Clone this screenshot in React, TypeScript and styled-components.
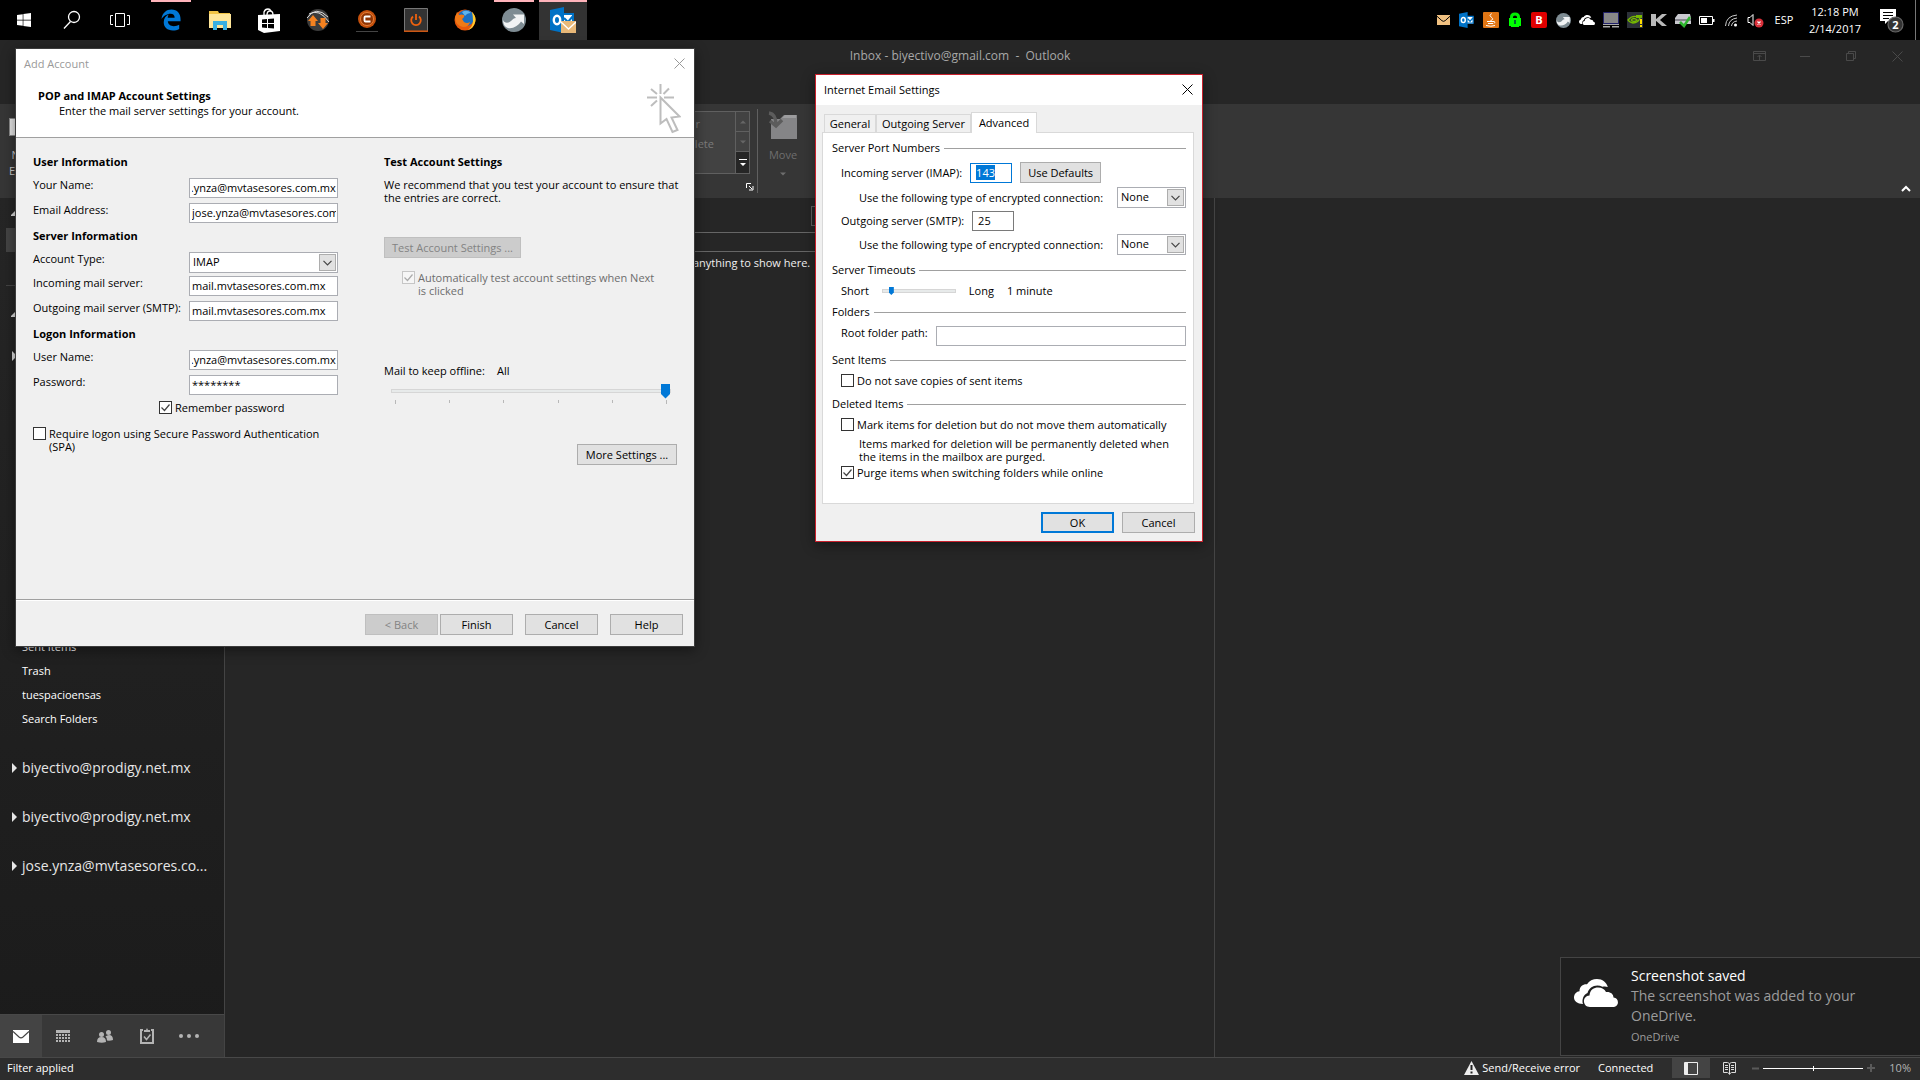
import React, { useEffect, useRef } from "react";
import styled, { createGlobalStyle, css } from "styled-components";
import { FaWindows } from "react-icons/fa";

const GlobalStyle = createGlobalStyle`
  *, *::before, *::after { box-sizing: border-box; }
  body {
    margin: 0;
    background: #262626;
    color: #000;
    font: 11px/14px "Open Sans", "Noto Sans", sans-serif;
  }
  button, input, select { font: inherit; color: inherit; margin: 0; }
  h1, h2, h3, p { margin: 0; font: inherit; }
  svg { display: block; }
`;

const Desktop = styled.div`
  position: relative;
  display: flex;
  flex-direction: column;
  min-height: 100vh;
  overflow: hidden;
`;

/* ---------- taskbar ---------- */

const Taskbar = styled.nav`
  display: flex;
  height: 40px;
  background: #000;
  color: #fff;
`;

const SystemButtons = styled.div`
  display: flex;
  width: 147px;
`;

const PinnedApps = styled.div`
  display: flex;
  gap: 1px;
`;

const TaskButton = styled.button<{ $active?: boolean; $running?: boolean }>`
  display: grid;
  place-items: center;
  width: 48px;
  height: 40px;
  padding: 0;
  border: 0;
  color: #fff;
  background: ${(p) => (p.$active ? "#333" : "transparent")};
  ${(p) =>
    (p.$running || p.$active) &&
    css`
      background-image: linear-gradient(#ffb3ba, #ffb3ba);
      background-repeat: no-repeat;
      background-position: top center;
      background-size: ${p.$active ? "48px" : "40px"} 2px;
    `}
`;

const Tray = styled.div`
  display: flex;
  align-items: center;
  margin-left: auto;
`;

const TrayButton = styled.button`
  display: grid;
  place-items: center;
  width: 24px;
  height: 40px;
  padding: 0;
  border: 0;
  background: none;
`;

const Language = styled.span`
  width: 34px;
  text-align: center;
`;

const Clock = styled.div`
  width: 68px;
  text-align: center;
  line-height: 17px;
`;

const NotifyButton = styled(TrayButton)`
  width: 46px;
`;

const ShowDesktop = styled.div`
  width: 5px;
  height: 40px;
  border-left: 1px solid #777;
`;

/* ---------- mail window ---------- */

const MailWindow = styled.main`
  flex: 1;
  display: flex;
  flex-direction: column;
  background: #262626;
`;

const MailTitleBar = styled.header`
  display: grid;
  grid-template-columns: 1fr auto 1fr;
  height: 64px;
  padding: 7px 0;
  color: #a8a8a8;
  font-size: 12px;
  line-height: 18px;
  white-space: pre;
`;

const WindowControls = styled.div`
  grid-column: 3;
  display: flex;
  justify-content: flex-end;
`;

const WindowButton = styled.button`
  display: grid;
  place-items: center;
  width: 46px;
  height: 18px;
  padding: 0;
  border: 0;
  background: none;
  color: #4a4a4a;
`;

const Ribbon = styled.section`
  display: flex;
  height: 94px;
  background: #363636;
  color: #6e6e6e;
`;

const NewEmail = styled.button`
  display: flex;
  flex-direction: column;
  align-items: center;
  width: 30px;
  margin-left: 8px;
  padding: 14px 0 0;
  border: 0;
  background: none;
  color: #ccc;
  line-height: 16px;
`;

const NewEmailIcon = styled.span`
  width: 28px;
  height: 18px;
  margin-bottom: 11px;
  border: 1px solid #8a8a8a;
  background: #e6e6e6;
`;

const QuickSteps = styled.div`
  display: flex;
  width: 130px;
  height: 63px;
  margin: 7px 0 0 582px;
  border: 1px solid #606060;
  background: #424242;
`;

const QuickStepList = styled.div`
  flex: 1;
  padding: 2px 0 2px 18px;
  line-height: 20px;
  color: #7c7c7c;
  white-space: nowrap;
`;

const GalleryScroll = styled.div`
  display: grid;
  grid-template-rows: 20px 20px 1fr;
  width: 14px;
  border-left: 1px solid #606060;
`;

const GalleryButton = styled.button<{ $enabled?: boolean }>`
  display: grid;
  place-items: center;
  padding: 0;
  border: 0;
  border-bottom: 1px solid #606060;
  background: ${(p) => (p.$enabled ? "#262626" : "#424242")};
  color: ${(p) => (p.$enabled ? "#fff" : "#666")};
  &:last-child { border-bottom: 0; }
`;

const Launcher = styled.button`
  align-self: flex-end;
  display: grid;
  place-items: center;
  width: 8px;
  height: 22px;
  margin: 0 3px 0 -4px;
  padding: 0;
  border: 0;
  background: none;
  color: #fff;
`;

const RibbonDivider = styled.div`
  width: 1px;
  height: 84px;
  margin-top: 5px;
  background: #606060;
`;

const RibbonButton = styled.button<{ $enabled?: boolean }>`
  display: flex;
  flex-direction: column;
  align-items: center;
  gap: 7px;
  width: 50px;
  padding: 7px 0 0;
  border: 0;
  background: none;
  color: ${(p) => (p.$enabled ? "#e6e6e6" : "#6e6e6e")};
`;

const CollapseRibbon = styled.button`
  align-self: flex-end;
  margin: 0 9px 5px auto;
  padding: 0;
  border: 0;
  background: none;
  color: #fff;
`;

const Panes = styled.div`
  flex: 1;
  display: grid;
  grid-template-columns: 225px 990fr 705fr;
`;

const Sidebar = styled.aside`
  display: flex;
  flex-direction: column;
  border-right: 1px solid #444;
  background: linear-gradient(#262626, #1b1b1b);
  color: #fff;
`;

const SidebarStub = styled.div<{ $h: number }>`
  display: flex;
  align-items: center;
  height: ${(p) => p.$h}px;
  padding-left: 11px;
  color: #ddd;
`;

const SelectedFolder = styled.div`
  height: 24px;
  margin-left: 6px;
  background: #444;
`;

const SidebarRule = styled.hr`
  width: 100%;
  height: 1px;
  margin: 33px 0 13px 6px;
  border: 0;
  background: #444;
`;

const FolderList = styled.ul`
  margin: 252px 0 12px;
  padding: 0 0 0 22px;
  list-style: none;
  line-height: 24px;
`;

const AccountRow = styled.button`
  display: flex;
  align-items: center;
  gap: 5px;
  height: 49px;
  padding: 0 0 0 11px;
  border: 0;
  background: none;
  color: #e6e6e6;
  font-size: 14px;
  white-space: nowrap;
`;

const NavBar = styled.nav`
  display: flex;
  height: 43px;
  margin-top: auto;
  border-top: 1px solid #484848;
  background: #383838;
`;

const NavButton = styled.button<{ $active?: boolean }>`
  display: grid;
  place-items: center;
  width: 42px;
  padding: 0;
  border: 0;
  color: ${(p) => (p.$active ? "#fff" : "#b4b4b4")};
  background: ${(p) => (p.$active ? "#444" : "transparent")};
`;

const ListPane = styled.section`
  display: flex;
  flex-direction: column;
  padding-right: 10px;
  border-right: 1px solid #444;
  color: #f0f0f0;
  text-align: center;
`;

const SearchRow = styled.div`
  display: flex;
  justify-content: flex-end;
  height: 35px;
  margin-right: 8px;
  padding: 8px 8px 6px;
  border-bottom: 1px solid #666;
`;

const ScopeBox = styled.div`
  width: 377px;
  border: 1px solid #606060;
`;

const ListHeader = styled.div`
  height: 19px;
  margin: 0 8px 4px 0;
  border-bottom: 1px solid #666;
`;

const StatusBar = styled.footer`
  display: flex;
  align-items: center;
  height: 23px;
  padding: 0 9px 2px 7px;
  border-top: 1px solid #484848;
  background: #2d2d2d;
  color: #fff;
`;

const SyncStatus = styled.button`
  display: flex;
  align-items: center;
  gap: 3px;
  margin: 0 18px 0 auto;
  padding: 0;
  border: 0;
  background: none;
`;

const ViewButton = styled.button<{ $active?: boolean }>`
  display: grid;
  place-items: center;
  width: 38px;
  height: 20px;
  padding: 0;
  border: 0;
  background: ${(p) => (p.$active ? "#444" : "transparent")};
`;

const ViewSwitch = styled.div`
  display: flex;
  margin-left: 19px;
`;

const Zoom = styled.div`
  display: flex;
  align-items: center;
  gap: 4px;
  margin: 0 14px 0 4px;
  color: #5a5a5a;
`;

const ZoomRange = styled.input`
  appearance: none;
  width: 100px;
  height: 11px;
  background: linear-gradient(#fff, #fff) center / 100% 1px no-repeat;
  &::-webkit-slider-thumb {
    appearance: none;
    width: 1px;
    height: 5px;
    background: #fff;
  }
`;

const ZoomLevel = styled.span`
  color: #b4b4b4;
`;

/* ---------- shared dialog parts ---------- */

const Dialog = styled.section<{ $x: number; $y: number; $w: number; $edge: string }>`
  position: absolute;
  left: ${(p) => p.$x}px;
  top: ${(p) => p.$y}px;
  width: ${(p) => p.$w}px;
  border: 1px solid ${(p) => p.$edge};
  background: #f0f0f0;
  box-shadow: 0 3px 12px rgba(0, 0, 0, 0.45);
`;

const DialogTitle = styled.header<{ $inactive?: boolean }>`
  display: flex;
  align-items: center;
  justify-content: space-between;
  height: 30px;
  padding: 0 9px 1px 8px;
  background: #fff;
  color: ${(p) => (p.$inactive ? "#999" : "#000")};
`;

const CloseButton = styled.button`
  padding: 0;
  border: 0;
  background: none;
  color: inherit;
`;

const PushButton = styled.button<{ $w?: number; $default?: boolean }>`
  width: ${(p) => p.$w ?? 73}px;
  height: 21px;
  padding: 0;
  border: ${(p) => (p.$default ? "2px solid #0078d7" : "1px solid #adadad")};
  background: #e1e1e1;
  line-height: 14px;
  white-space: nowrap;
  &:disabled {
    border-color: #bfbfbf;
    background: #ccc;
    color: #838383;
  }
`;

const TextBox = styled.input<{ $w?: number; $edge?: string }>`
  width: ${(p) => (p.$w ? p.$w + "px" : "auto")};
  flex: ${(p) => (p.$w ? "none" : "1")};
  min-width: 0;
  height: 20px;
  padding: 0 1px 1px 2px;
  border: 1px solid ${(p) => p.$edge ?? "#abadb3"};
  border-radius: 0;
  outline: 0;
  background: #fff;
  &::selection { background: #0078d7; color: #fff; }
`;

const PortBox = styled(TextBox)`
  padding: 0 5px 1px;
`;

const SelectFrame = styled.span<{ $w: number }>`
  display: grid;
  grid-template-areas: "stack";
  align-items: center;
  width: ${(p) => p.$w}px;
  height: 21px;
  > * { grid-area: stack; }
`;

const NativeSelect = styled.select`
  appearance: none;
  width: 100%;
  height: 21px;
  padding: 0 20px 1px 3px;
  border: 1px solid #abadb3;
  border-radius: 0;
  background: #fff;
`;

const SelectArrow = styled.span`
  justify-self: end;
  display: grid;
  place-items: center;
  width: 17px;
  height: 17px;
  margin-right: 2px;
  border: 1px solid #adadad;
  background: #e1e1e1;
  color: #444;
  pointer-events: none;
`;

const tick = `url("data:image/svg+xml,%3Csvg xmlns='http://www.w3.org/2000/svg' viewBox='0 0 11 11'%3E%3Cpath d='M1.5 5.5l3 3 5-6' fill='none' stroke='%23444' stroke-width='1.2'/%3E%3C/svg%3E")`;

const TickBox = styled.input`
  appearance: none;
  flex: none;
  width: 13px;
  height: 13px;
  border: 1px solid #333;
  background: #fff;
  &:checked { background: #fff ${tick} center / 11px no-repeat; }
  &:disabled { opacity: 0.4; border-color: #888; }
`;

const TickLabel = styled.label<{ $indent?: number; $disabled?: boolean }>`
  display: flex;
  align-items: flex-start;
  gap: 3px;
  min-height: 14px;
  padding-left: ${(p) => p.$indent ?? 0}px;
  line-height: 13px;
  color: ${(p) => (p.$disabled ? "#6d6d6d" : "#000")};
`;

const Slider = styled.input<{ $w: number; $big?: boolean }>`
  appearance: none;
  display: block;
  width: ${(p) => p.$w}px;
  height: ${(p) => (p.$big ? 15 : 10)}px;
  background: none;
  &::-webkit-slider-runnable-track {
    height: 4px;
    border: 1px solid #d6d6d6;
    background: #e7eaea;
  }
  &::-webkit-slider-thumb {
    appearance: none;
    width: ${(p) => (p.$big ? 9 : 5)}px;
    height: ${(p) => (p.$big ? 15 : 8)}px;
    margin-top: ${(p) => (p.$big ? -6 : -3)}px;
    background: #0078d7;
    clip-path: polygon(0 0, 100% 0, 100% 70%, 50% 100%, 0 70%);
  }
`;

/* ---------- add account dialog ---------- */

const WizardHeader = styled.div`
  display: flex;
  justify-content: space-between;
  height: 59px;
  padding: 10px 13px 0 22px;
  border-bottom: 1px solid #a0a0a0;
  background: #fff;
  svg { margin-top: -5px; }
`;

const WizardHeading = styled.h1`
  font-weight: 700;
`;

const WizardHint = styled.p`
  padding: 1px 0 0 21px;
`;

const WizardBody = styled.div`
  display: grid;
  grid-template-columns: 351px 1fr;
  height: 462px;
  padding: 16px 14px 0 17px;
  border-bottom: 1px solid #a0a0a0;
`;

const SectionHeading = styled.h2`
  padding-top: 1px;
  margin-bottom: 9px;
  font-weight: 700;
`;

const Field = styled.div<{ $gap?: number }>`
  display: flex;
  align-items: flex-start;
  margin-bottom: ${(p) => p.$gap ?? 5}px;
`;

const FieldLabel = styled.label`
  width: 156px;
`;

const Logon = styled.div`
  display: flex;
  flex-direction: column;
  gap: 12px;
  width: 310px;
  padding-top: 1px;
`;

const TestColumn = styled.div`
  display: flex;
  flex-direction: column;
  align-items: flex-start;
`;

const Advice = styled.p`
  margin-bottom: 33px;
  line-height: 13px;
`;

const AutoTest = styled.div`
  width: 262px;
  margin: 13px 0 67px 18px;
`;

const OfflineRow = styled.div`
  display: flex;
  gap: 12px;
  margin-bottom: 5px;
`;

const OfflineScale = styled.div`
  padding-left: 7px;
  margin-bottom: 40px;
`;

const Ticks = styled.div`
  display: flex;
  justify-content: space-between;
  width: 272px;
  margin: 2px 0 0 4px;
  span { width: 1px; height: 3px; background: #b8b8b8; }
  span:first-child, span:last-child { height: 4px; }
`;

const MoreSettings = styled.div`
  align-self: flex-end;
  margin-right: 3px;
`;

const WizardFooter = styled.footer`
  display: flex;
  justify-content: flex-end;
  padding: 13px 11px 11px;
  border-top: 1px solid #fff;
`;

const ButtonPair = styled.div`
  display: flex;
  gap: 2px;
`;

const FooterGroup = styled.div`
  display: flex;
  gap: 12px;
`;

/* ---------- internet email settings dialog ---------- */

const TabBar = styled.div`
  display: flex;
  align-items: flex-end;
  padding: 7px 8px 0;
`;

const Tab = styled.button<{ $selected?: boolean; $w: number }>`
  width: ${(p) => p.$w}px;
  height: ${(p) => (p.$selected ? 21 : 18)}px;
  margin: 0 0 ${(p) => (p.$selected ? -1 : 0)}px 0;
  padding: 0;
  border: 1px solid #d9d9d9;
  border-bottom: 0;
  background: ${(p) => (p.$selected ? "#fff" : "#f0f0f0")};
  white-space: nowrap;
  z-index: 1;
  & + & { border-left-width: ${(p) => (p.$selected ? 1 : 0)}px; }
`;

const TabPanel = styled.div`
  margin: 0 8px 0 6px;
  padding: 8px 7px 23px 9px;
  border: 1px solid #d9d9d9;
  background: #fff;
`;

const GroupTitle = styled.h3`
  display: flex;
  align-items: center;
  gap: 4px;
  margin-bottom: 7px;
  &::after {
    content: "";
    flex: 1;
    height: 1px;
    background: #a0a0a0;
  }
`;

const SettingRow = styled.div<{ $indent?: number; $gap?: number }>`
  display: flex;
  align-items: center;
  gap: 8px;
  padding-left: ${(p) => p.$indent ?? 9}px;
  margin-bottom: ${(p) => p.$gap ?? 3}px;
  ${SelectFrame} { margin-left: auto; }
`;

const TimeoutRow = styled(SettingRow)`
  gap: 13px;
  height: 14px;
`;

const FolderRow = styled(SettingRow)`
  align-items: flex-start;
`;

const Purged = styled.p`
  padding: 5px 0 3px 27px;
  line-height: 13px;
`;

const GroupEnd = styled.div`
  height: 9px;
`;

const SettingsFooter = styled.footer`
  display: flex;
  justify-content: flex-end;
  gap: 8px;
  padding: 8px 7px;
`;

/* ---------- toast ---------- */

const Toast = styled.aside`
  position: absolute;
  right: 0;
  bottom: 24px;
  display: grid;
  grid-template-columns: 44px 1fr;
  gap: 13px;
  width: 360px;
  height: 99px;
  padding: 8px 12px 8px 13px;
  border: 1px solid #444;
  border-right: 0;
  background: #1f1f1f;
  color: #9c9c9c;
  svg { margin-top: 13px; }
`;

const ToastTitle = styled.h2`
  color: #fff;
  font-size: 14px;
  line-height: 20px;
`;

const ToastText = styled.p`
  font-size: 14px;
  line-height: 20px;
`;

const ToastSource = styled.p`
  padding-top: 2px;
  line-height: 18px;
`;

/* ---------- icons ---------- */

const Cross = ({ size = 11 }: { size?: number }) => (
  <svg width={size} height={size} viewBox="0 0 11 11" stroke="currentColor" fill="none">
    <path d="M.5.5l10 10M10.5.5l-10 10" />
  </svg>
);

const Triangle = ({ dir }: { dir: "right" | "up" | "down" | "corner" }) => {
  const d = { right: "M1 0l5 5-5 5z", up: "M2 6.500l3-3 3 3z", down: "M2 3.500l3 3 3-3z", corner: "M5 2v6H-1z" }[dir];
  return (
    <svg width={dir === "right" || dir === "corner" ? 6 : 10} height="10" fill="currentColor">
      <path d={d} />
    </svg>
  );
};

const Envelope = ({ w, body, line }: { w: number; body: string; line: string }) => (
  <svg width={w} height={(w * 13) / 16} viewBox="0 0 16 13">
    <path fill={body} d="M0 0h16v13H0z" />
    <path fill="none" stroke={line} strokeWidth="1.2" d="M0 1.500l6 5.500q2 1.600 4 0l6-5.500" />
  </svg>
);

const OutlookMark = ({ size, badge }: { size: number; badge?: boolean }) => (
  <svg width={size} height={size} viewBox="0 0 26 26">
    <path fill="#fff" d="M13 7h10v12H13z" />
    <path fill="none" stroke="#0072c6" strokeWidth="2" d="M13 7h10v11H13M14 11l4 4 5-6" />
    <path fill="#0072c6" d="M0 3l14-3v26L0 23z" />
    <ellipse cx="7" cy="13" rx="3.200" ry="4.200" fill="none" stroke="#fff" strokeWidth="2.400" />
    {badge && (
      <>
        <path fill="#e8b878" d="M11 14h15v12H11z" />
        <path fill="none" stroke="#fff" strokeWidth="1.300" d="M11 15l7.500 7 7.500-7" />
      </>
    )}
  </svg>
);

const EdgeIcon = () => (
  <svg width="20" height="22" viewBox="0 0 22 24" fill="#0078d7">
    <path d="M.5 11C1.500 4 6 .5 11.500.5 18 .5 21.500 5 21.500 11v2.500h-14c.2 3.500 3 5.300 6.500 5.300 2.500 0 4.500-.6 6-1.600v4.600c-2 1.200-4.500 1.700-7 1.700-6 0-10-3.500-10-9 0-4 2-7 5.500-8.500-.7 1-1 2-1.100 3.500H15C15 6.500 13.500 5 10.500 5 6.500 5 2.500 7.500.5 11z" />
  </svg>
);

const Clouds = ({ w }: { w: number }) => (
  <svg width={w} height={(w * 28) / 44} viewBox="0 0 44 28" fill="#fff">
    <path d="M9 25C3 25 0 22 0 18.500c0-3.500 2.500-6 5.500-6.300C5.500 7.500 9 5 13 5.300 15 1.800 19 0 23 0c5.500 0 9.500 3.300 10.800 8-2-.8-3.800-.7-5.300-.2C22 4.500 15 8 13.500 14 9.500 15.500 7.500 21 9 25z" />
    <path d="M16 28c-8 0-8-11-.5-11.500C16 10.500 20 8.500 24 8.500c4 0 6.500 1.700 8 4.500 4.500-.5 7.500 2 7.500 5.500 6 .3 6 9.500-.5 9.500z" />
  </svg>
);

const Swirl = ({ size }: { size: number }) => (
  <svg width={size} height={size} viewBox="0 0 24 24">
    <circle cx="12" cy="12" r="12" fill="#7e8c93" />
    <path fill="#f1f3f4" d="M1 12c1 3 5 4 8 1 2-2 3-3 5-3l-3-3.500h11V16l-3-2.500C16 18 11 21 6 20 2.500 19 1 15.500 1 12z" />
  </svg>
);

const SearchIcon = () => (
  <svg width="18" height="20" viewBox="0 0 18 20" fill="none" stroke="#fff" strokeWidth="1.300">
    <circle cx="11" cy="7" r="5.500" />
    <path d="M7.500 11.500L1 18.500" />
  </svg>
);

const TaskViewIcon = () => (
  <svg width="22" height="16" viewBox="0 0 22 16" fill="none" stroke="#fff">
    <path d="M6.500 1.500h9v13h-9zM4 3.500H1.500v9H4M18 3.500h2.500v9H18" />
  </svg>
);

const FolderIcon = () => (
  <svg width="22" height="20" viewBox="0 0 22 20">
    <path fill="#f2c445" d="M0 1h9l1 2h11v2H0z" />
    <path fill="#ffe699" d="M0 4h22v14H0z" />
    <path fill="#38b0e3" d="M4 11h14v9h-4v-5H8v5H4z" />
  </svg>
);

const StoreIcon = () => (
  <svg width="22" height="25" viewBox="0 0 22 25">
    <path fill="none" stroke="#fff" strokeWidth="1.300" d="M6 7V4q1-3 4-3 2 0 3 2M9 7q0-4 3-4t3 4" />
    <path fill="#fff" d="M0 7l22-1v17l-16 2-6-3z" />
    <path fill="#000" d="M4 11.500l5-.5v4H4zM10 11l6-.5V15h-6zM4 16h5v4l-5-.5zM10 16h6v4.500l-6-.4z" />
  </svg>
);

const TransferIcon = () => (
  <svg width="24" height="24" viewBox="0 0 24 24">
    <circle cx="12" cy="12" r="11" fill="#3c3c3c" />
    <path fill="none" stroke="#ddd" d="M1 10Q10-3 22 9M3 6q10-6 20 8" />
    <path fill="#f58220" d="M7 7l5 6H9.500v5h-5v-5H2zM17 21l-5-6h2.500v-5h5v5H22z" />
  </svg>
);

const CIcon = () => (
  <svg width="24" height="24" viewBox="0 0 24 24">
    <circle cx="12" cy="11" r="9" fill="#c4500c" />
    <circle cx="12" cy="11" r="6.500" fill="#8f3403" stroke="#e8813a" />
    <path fill="none" stroke="#fff" strokeWidth="1.800" d="M15.500 8.500h-5q-1 0-1 1v3q0 1 1 1h5" />
    <path stroke="#444" d="M1 23.500h22" />
  </svg>
);

const PowerIcon = () => (
  <svg width="24" height="24" viewBox="0 0 24 24">
    <path fill="#333" stroke="#777" d="M.5.5h23v23H.5z" />
    <path stroke="#d0560f" strokeWidth="1.500" d="M0 23.200h24" />
    <path fill="none" stroke="#f0620e" strokeWidth="1.800" d="M9 8.500a4.800 4.800 0 1 0 6 0M12 6v6" />
  </svg>
);

const FirefoxIcon = () => (
  <svg width="22" height="22" viewBox="0 0 22 22">
    <circle cx="11" cy="11" r="10.500" fill="#e8590c" />
    <circle cx="12" cy="9" r="8" fill="#1b6fc2" />
    <path fill="#5fb4ee" d="M8 3q5-3 9 1-4 0-6 3z" />
    <path fill="#ffcb2d" d="M18 3q6 6 2 13-2 4-6 5 5-4 5-9 0-5-1-9z" />
    <path fill="#f07a17" d="M1 9l2-6 2 3q2-1 5 0 1 2-2 4l2 3q3 2 6 0-1 5-7 5Q2 17 1 9z" />
  </svg>
);

const JavaIcon = () => (
  <svg width="16" height="16" viewBox="0 0 16 16">
    <rect width="16" height="16" rx="1" fill="#e07514" />
    <path fill="none" stroke="#fff" d="M8.500 1.500q-3 2 0 4t-1 3M4 9.500h7q2 .5 0 2M5 11.500h5M3 13.500q5 1.500 9 0" />
  </svg>
);

const LockIcon = () => (
  <svg width="14" height="16" viewBox="0 0 14 16">
    <path fill="none" stroke="#0e0" strokeWidth="3" d="M3.500 7V5q0-3 3.500-3t3.500 3v2" />
    <path fill="#0f0" d="M1 6h12v8h-2v1H3v-1H1z" />
    <path fill="#063" d="M6 8h2v4H6z" />
  </svg>
);

const BBadge = styled.span`
  width: 16px;
  height: 16px;
  border-radius: 2px;
  background: #e00000;
  color: #fff;
  font-weight: 700;
  line-height: 16px;
`;

const MonitorIcon = () => (
  <svg width="16" height="16" viewBox="0 0 16 16">
    <path fill="#888" stroke="#22226a" d="M.5.5h15v11H.5z" />
    <path fill="#aaa" d="M0 12h16v1H0zM0 14h7v1.500H0zM9 14h7v1.500H9z" />
  </svg>
);

const GpuIcon = () => (
  <svg width="16" height="16" viewBox="0 0 16 16">
    <path fill="#2c3138" d="M0 0h16v16H0z" />
    <path fill="none" stroke="#76b900" strokeWidth="1.300" d="M1 8q5-6 12-2-2 5-7 5-4-1-5-3zM4 8q3-3 6 0-3 3-6 0" />
    <path fill="#76b900" d="M9 3h6v3H9z" />
    <path fill="#fd0" d="M13 7h2v5h-2zM13 13h2v2h-2z" />
  </svg>
);

const KIcon = () => (
  <svg width="16" height="14" viewBox="0 0 16 14" fill="#b9b9b9">
    <path d="M0 1h5v12H0zM4 7l7-6h5L9 7l7 6h-5z" />
  </svg>
);

const PrinterIcon = () => (
  <svg width="16" height="16" viewBox="0 0 16 16">
    <path fill="#c9c9cf" d="M3 2h12l1 4v6H0V6z" />
    <path fill="#86868e" d="M0 7h16v2H0z" />
    <path fill="none" stroke="#2fb52f" strokeWidth="2.600" d="M5 10l4 4 6-9" />
  </svg>
);

const BatteryIcon = () => (
  <svg width="16" height="9" viewBox="0 0 16 9">
    <path fill="none" stroke="#fff" d="M.5.5h13v8H.5z" />
    <path fill="#fff" d="M2 2h6v5H2zM14 3h1.500v3H14z" />
  </svg>
);

const WifiIcon = () => (
  <svg width="14" height="14" viewBox="0 0 14 14" fill="none" stroke="#ccc">
    <path d="M1.500 13Q2 3 13 2M4.500 13Q5 6 13 5M7.500 13Q8 8.500 13 8" />
    <circle cx="11.500" cy="12" r="1.500" fill="#fff" stroke="none" />
  </svg>
);

const SpeakerIcon = () => (
  <svg width="17" height="15" viewBox="0 0 17 15">
    <path fill="none" stroke="#fff" d="M1 4.500h2l3-3v11l-3-3H1z" />
    <circle cx="12" cy="10" r="4.500" fill="#d9303a" />
    <path stroke="#fff" strokeWidth="1.200" d="M10.500 8.500l3 3M13.500 8.500l-3 3" />
  </svg>
);

const NotifyIcon = () => (
  <svg width="24" height="25" viewBox="0 0 24 25">
    <path fill="#fff" d="M0 1h16v12H8l-3 3v-3H0z" />
    <path stroke="#000" d="M3 4.500h10M3 7.500h10M3 10.500h6" />
    <circle cx="15.500" cy="16.500" r="7.500" fill="#333" stroke="#666" strokeWidth="1.200" />
    <text x="15.500" y="20.500" textAnchor="middle" fill="#fff" fontSize="11" fontWeight="700">2</text>
  </svg>
);

const ClickArrow = () => (
  <svg width="34" height="50" viewBox="0 0 34 50" fill="none" stroke="#bdbdbd" strokeWidth="2">
    <path d="M13.500 0v10M0 13.500h10M17 13.500h10M4 5l6 5M22 4.500l-5.500 5.500M4 22l6-5.500" />
    <path fill="#fff" d="M13.500 13.500v26l6-4.500 6 13 5-2-6-12.500 8-1z" />
  </svg>
);

const MoveIcon = () => (
  <svg width="30" height="30" viewBox="0 0 30 30">
    <path fill="#858587" d="M3 8h9l4-4h13v24H3z" />
    <path fill="#9c9c9e" d="M14 7l3-3h11v3z" />
    <path fill="none" stroke="#5c5c5c" strokeWidth="3.500" d="M1 2q7 1 7 12M2 10l6 5 6-6" />
  </svg>
);

const RulesIcon = () => (
  <svg width="34" height="30" viewBox="0 0 34 30">
    <path fill="#dcb468" d="M0 8h34v20H0z" />
    <path fill="#444" d="M2 19h8v7H2z" />
  </svg>
);

const navIcons = [
  <svg width="14" height="12" fill="currentColor">
    <path d="M0 0h14v3H0zM0 4h2v2H0zM3 4h2v2H3zM6 4h2v2H6zM9 4h2v2H9zM12 4h2v2h-2zM0 7h2v2H0zM3 7h2v2H3zM6 7h2v2H6zM9 7h2v2H9zM12 7h2v2h-2zM0 10h2v2H0zM3 10h2v2H3zM6 10h2v2H6zM9 10h2v2H9zM12 10h2v2h-2z" />
  </svg>,
  <svg width="16" height="13" fill="currentColor">
    <circle cx="4.500" cy="4.500" r="2.500" />
    <path d="M0 12q0-5 4.500-5T9 12q-4 1.500-9 0z" />
    <circle cx="11.500" cy="2.500" r="2.500" />
    <path d="M8.500 6.500Q10 5 12 5q4 0 4 5-3 1-6 .5 0-3-1.500-4z" />
  </svg>,
  <svg width="14" height="16" fill="none" stroke="currentColor">
    <path strokeWidth="2" d="M3 2H1v13h12V2h-2" />
    <path fill="currentColor" stroke="none" d="M4 2h2l1-2 1 2h2v2H4z" />
    <path strokeWidth="1.500" d="M4 8.500l2.500 3 4-5" />
  </svg>,
  <svg width="20" height="4" fill="currentColor">
    <circle cx="2" cy="2" r="2" />
    <circle cx="10" cy="2" r="2" />
    <circle cx="18" cy="2" r="2" />
  </svg>,
];
const navNames = ["Calendar", "People", "Tasks", "More"];

/* ---------- small components ---------- */

const AccountField = ({ id, label, value, toEnd }: { id: string; label: string; value: string; toEnd?: boolean }) => {
  const box = useRef<HTMLInputElement>(null);
  useEffect(() => {
    if (toEnd && box.current) box.current.scrollLeft = box.current.scrollWidth;
  }, [toEnd]);
  return (
    <Field>
      <FieldLabel htmlFor={id}>{label}</FieldLabel>
      <TextBox id={id} ref={box} $w={149} defaultValue={value} />
    </Field>
  );
};

const DropDown = ({ id, value, width }: { id: string; value: string; width: number }) => (
  <SelectFrame $w={width}>
    <NativeSelect id={id} defaultValue={value}>
      <option>{value}</option>
    </NativeSelect>
    <SelectArrow>
      <svg width="9" height="6" fill="none" stroke="currentColor" strokeWidth="1.200">
        <path d="M.5.8l4 4 4-4" />
      </svg>
    </SelectArrow>
  </SelectFrame>
);

const EncryptionRow = ({ id, gap }: { id: string; gap: number }) => (
  <SettingRow $indent={27} $gap={gap}>
    <label htmlFor={id}>Use the following type of encrypted connection:</label>
    <DropDown id={id} value="None" width={69} />
  </SettingRow>
);

const AddAccount = () => (
  <Dialog $x={15} $y={48} $w={680} $edge="#3c3c3c">
    <DialogTitle $inactive>
      Add Account
      <CloseButton aria-label="Close"><Cross /></CloseButton>
    </DialogTitle>
    <WizardHeader>
      <div>
        <WizardHeading>POP and IMAP Account Settings</WizardHeading>
        <WizardHint>Enter the mail server settings for your account.</WizardHint>
      </div>
      <ClickArrow />
    </WizardHeader>
    <WizardBody>
      <div>
        <SectionHeading>User Information</SectionHeading>
        <AccountField id="name" label="Your Name:" value="jose.ynza@mvtasesores.com.mx" toEnd />
        <AccountField id="email" label="Email Address:" value="jose.ynza@mvtasesores.com.mx" />
        <SectionHeading>Server Information</SectionHeading>
        <Field $gap={3}>
          <FieldLabel htmlFor="type">Account Type:</FieldLabel>
          <DropDown id="type" value="IMAP" width={149} />
        </Field>
        <AccountField id="incoming" label="Incoming mail server:" value="mail.mvtasesores.com.mx" />
        <AccountField id="outgoing" label="Outgoing mail server (SMTP):" value="mail.mvtasesores.com.mx" />
        <SectionHeading>Logon Information</SectionHeading>
        <AccountField id="user" label="User Name:" value="jose.ynza@mvtasesores.com.mx" toEnd />
        <AccountField id="password" label="Password:" value="********" />
        <Logon>
          <TickLabel $indent={126}>
            <TickBox type="checkbox" defaultChecked />
            Remember password
          </TickLabel>
          <TickLabel>
            <TickBox type="checkbox" />
            Require logon using Secure Password Authentication (SPA)
          </TickLabel>
        </Logon>
      </div>
      <TestColumn>
        <SectionHeading>Test Account Settings</SectionHeading>
        <Advice>We recommend that you test your account to ensure that the entries are correct.</Advice>
        <PushButton $w={137} disabled>Test Account Settings ...</PushButton>
        <AutoTest>
          <TickLabel $disabled>
            <TickBox type="checkbox" defaultChecked disabled />
            Automatically test account settings when Next is clicked
          </TickLabel>
        </AutoTest>
        <OfflineRow>
          <label htmlFor="offline">Mail to keep offline:</label>
          <span>All</span>
        </OfflineRow>
        <OfflineScale>
          <Slider id="offline" type="range" min={0} max={5} defaultValue={5} $w={280} $big />
          <Ticks>
            {[0, 1, 2, 3, 4, 5].map((n) => <span key={n} />)}
          </Ticks>
        </OfflineScale>
        <MoreSettings>
          <PushButton $w={100}>More Settings ...</PushButton>
        </MoreSettings>
      </TestColumn>
    </WizardBody>
    <WizardFooter>
      <FooterGroup>
        <ButtonPair>
          <PushButton disabled>&lt; Back</PushButton>
          <PushButton>Finish</PushButton>
        </ButtonPair>
        <PushButton>Cancel</PushButton>
        <PushButton>Help</PushButton>
      </FooterGroup>
    </WizardFooter>
  </Dialog>
);

const EmailSettings = () => {
  const port = useRef<HTMLInputElement>(null);
  useEffect(() => {
    port.current?.focus();
    port.current?.select();
  }, []);
  return (
    <Dialog $x={815} $y={74} $w={388} $edge="#c8202c">
      <DialogTitle>
        Internet Email Settings
        <CloseButton aria-label="Close"><Cross /></CloseButton>
      </DialogTitle>
      <TabBar role="tablist">
        <Tab role="tab" $w={52}>General</Tab>
        <Tab role="tab" $w={95}>Outgoing Server</Tab>
        <Tab role="tab" $w={66} $selected>Advanced</Tab>
      </TabBar>
      <TabPanel role="tabpanel">
        <GroupTitle>Server Port Numbers</GroupTitle>
        <SettingRow $gap={4}>
          <label htmlFor="imap">Incoming server (IMAP):</label>
          <PortBox id="imap" ref={port} $w={42} $edge="#0078d7" defaultValue="143" />
          <PushButton $w={81}>Use Defaults</PushButton>
        </SettingRow>
        <EncryptionRow id="imap-encryption" gap={3} />
        <SettingRow>
          <label htmlFor="smtp">Outgoing server (SMTP):</label>
          <PortBox id="smtp" $w={42} $edge="#7a7a7a" defaultValue="25" />
        </SettingRow>
        <EncryptionRow id="smtp-encryption" gap={8} />
        <GroupTitle>Server Timeouts</GroupTitle>
        <TimeoutRow $gap={7}>
          <label htmlFor="timeout">Short</label>
          <Slider id="timeout" type="range" min={0} max={100} defaultValue={9} $w={74} />
          <span>Long</span>
          <span>1 minute</span>
        </TimeoutRow>
        <GroupTitle>Folders</GroupTitle>
        <FolderRow $gap={7}>
          <label htmlFor="root">Root folder path:</label>
          <TextBox id="root" />
        </FolderRow>
        <GroupTitle>Sent Items</GroupTitle>
        <TickLabel $indent={9}>
          <TickBox type="checkbox" />
          Do not save copies of sent items
        </TickLabel>
        <GroupEnd />
        <GroupTitle>Deleted Items</GroupTitle>
        <TickLabel $indent={9}>
          <TickBox type="checkbox" />
          Mark items for deletion but do not move them automatically
        </TickLabel>
        <Purged>Items marked for deletion will be permanently deleted when the items in the mailbox are purged.</Purged>
        <TickLabel $indent={9}>
          <TickBox type="checkbox" defaultChecked />
          Purge items when switching folders while online
        </TickLabel>
      </TabPanel>
      <SettingsFooter>
        <PushButton $default>OK</PushButton>
        <PushButton>Cancel</PushButton>
      </SettingsFooter>
    </Dialog>
  );
};

const trayIcons = [
  <Envelope w={13} body="#f0c080" line="#000" />,
  <OutlookMark size={16} />,
  <JavaIcon />,
  <LockIcon />,
  <BBadge>B</BBadge>,
  <Swirl size={15} />,
  <Clouds w={16} />,
  <MonitorIcon />,
  <GpuIcon />,
  <KIcon />,
  <PrinterIcon />,
  <BatteryIcon />,
  <WifiIcon />,
  <SpeakerIcon />,
];

export default function App() {
  return (
    <Desktop>
      <GlobalStyle />
      <Taskbar>
        <SystemButtons>
          <TaskButton><FaWindows size={16} /></TaskButton>
          <TaskButton><SearchIcon /></TaskButton>
          <TaskButton><TaskViewIcon /></TaskButton>
        </SystemButtons>
        <PinnedApps>
          <TaskButton $running><EdgeIcon /></TaskButton>
          <TaskButton><FolderIcon /></TaskButton>
          <TaskButton><StoreIcon /></TaskButton>
          <TaskButton><TransferIcon /></TaskButton>
          <TaskButton><CIcon /></TaskButton>
          <TaskButton><PowerIcon /></TaskButton>
          <TaskButton><FirefoxIcon /></TaskButton>
          <TaskButton $running><Swirl size={24} /></TaskButton>
          <TaskButton $active><OutlookMark size={26} badge /></TaskButton>
        </PinnedApps>
        <Tray>
          {trayIcons.map((icon, i) => <TrayButton key={i}>{icon}</TrayButton>)}
          <Language>ESP</Language>
          <Clock>
            <div>12:18 PM</div>
            <div>2/14/2017</div>
          </Clock>
          <NotifyButton><NotifyIcon /></NotifyButton>
          <ShowDesktop />
        </Tray>
      </Taskbar>

      <MailWindow>
        <MailTitleBar>
          <span />
          <span>{"Inbox - biyectivo@gmail.com  -  Outlook"}</span>
          <WindowControls>
            <WindowButton aria-label="Ribbon display">
              <svg width="13" height="10" fill="none" stroke="currentColor"><path d="M.5.5h12v9H.5zM1 2.500h11M6.500 9V4.500M4.500 6l2-2 2 2" /></svg>
            </WindowButton>
            <WindowButton aria-label="Minimize">
              <svg width="10" height="1"><path fill="currentColor" d="M0 0h10v1H0z" /></svg>
            </WindowButton>
            <WindowButton aria-label="Restore">
              <svg width="10" height="10" fill="none" stroke="currentColor"><path d="M.5 2.500h7v7h-7zM2.500 2V.5h7v7H8" /></svg>
            </WindowButton>
            <WindowButton aria-label="Close"><Cross /></WindowButton>
          </WindowControls>
        </MailTitleBar>

        <Ribbon>
          <NewEmail>
            <NewEmailIcon />
            New Email
          </NewEmail>
          <QuickSteps>
            <QuickStepList>
              <div>To Manager</div>
              <div>Reply &amp; Delete</div>
            </QuickStepList>
            <GalleryScroll>
              <GalleryButton aria-label="Up"><Triangle dir="up" /></GalleryButton>
              <GalleryButton aria-label="Down"><Triangle dir="down" /></GalleryButton>
              <GalleryButton aria-label="More" $enabled>
                <svg width="8" height="8" fill="currentColor"><path d="M0 0h8v1H0zM1 4h6L4 7z" /></svg>
              </GalleryButton>
            </GalleryScroll>
          </QuickSteps>
          <Launcher aria-label="Quick step settings">
            <svg width="8" height="8" fill="none" stroke="currentColor"><path d="M.5 5V.5H5M3 3l3 3M7 3v4H3" /></svg>
          </Launcher>
          <RibbonDivider />
          <RibbonButton>
            <MoveIcon />
            Move
            <Triangle dir="down" />
          </RibbonButton>
          <RibbonButton $enabled>
            <RulesIcon />
            Rules
          </RibbonButton>
          <CollapseRibbon aria-label="Collapse ribbon">
            <svg width="10" height="8" fill="none" stroke="currentColor" strokeWidth="2"><path d="M1 6l4-4 4 4" /></svg>
          </CollapseRibbon>
        </Ribbon>

        <Panes>
          <Sidebar>
            <SidebarStub $h={30}><Triangle dir="corner" /></SidebarStub>
            <SelectedFolder />
            <SidebarRule />
            <SidebarStub $h={30}><Triangle dir="corner" /></SidebarStub>
            <SidebarStub $h={54}><Triangle dir="right" /></SidebarStub>
            <FolderList>
              <li>Sent Items</li>
              <li>Trash</li>
              <li>tuespacioensas</li>
              <li>Search Folders</li>
            </FolderList>
            <AccountRow><Triangle dir="right" />biyectivo@prodigy.net.mx</AccountRow>
            <AccountRow><Triangle dir="right" />biyectivo@prodigy.net.mx</AccountRow>
            <AccountRow><Triangle dir="right" />jose.ynza@mvtasesores.co...</AccountRow>
            <NavBar>
              <NavButton $active aria-label="Mail"><Envelope w={16} body="#fff" line="#444" /></NavButton>
              {navIcons.map((icon, i) => (
                <NavButton key={i} aria-label={navNames[i]}>{icon}</NavButton>
              ))}
            </NavBar>
          </Sidebar>
          <ListPane>
            <SearchRow><ScopeBox /></SearchRow>
            <ListHeader />
            <p>We didn't find anything to show here.</p>
          </ListPane>
        </Panes>

        <StatusBar>
          <span>Filter applied</span>
          <SyncStatus>
            <svg width="15" height="14" viewBox="0 0 15 14">
              <path fill="#eee" d="M7.500 0L15 14H0z" />
              <path fill="#222" d="M6.500 4h2v5h-2zM6.500 10.500h2v2h-2z" />
            </svg>
            Send/Receive error
          </SyncStatus>
          <span>Connected</span>
          <ViewSwitch>
            <ViewButton $active aria-label="Normal view">
              <svg width="14" height="13"><path fill="none" stroke="#eee" d="M.5.5h13v12H.5z" /><path fill="#eee" d="M1 1h3v11H1z" /></svg>
            </ViewButton>
            <ViewButton aria-label="Reading view">
              <svg width="13" height="13" fill="none" stroke="#ddd"><path d="M6.500 2v10.500M.5.500h4l2 1 2-1h4v10h-4l-2 1.500-2-1.500h-4zM2 3.500h3M2 5.500h3M2 7.500h3M8 3.500h3M8 5.500h3M8 7.500h3" /></svg>
            </ViewButton>
          </ViewSwitch>
          <Zoom>
            <svg width="7" height="7" stroke="currentColor" strokeWidth="2"><path d="M0 3.500h7" /></svg>
            <ZoomRange type="range" aria-label="Zoom" defaultValue={50} />
            <svg width="8" height="8" stroke="currentColor" strokeWidth="2"><path d="M0 4h8M4 0v8" /></svg>
          </Zoom>
          <ZoomLevel>10%</ZoomLevel>
        </StatusBar>
      </MailWindow>

      <AddAccount />
      <EmailSettings />

      <Toast>
        <Clouds w={44} />
        <div>
          <ToastTitle>Screenshot saved</ToastTitle>
          <ToastText>The screenshot was added to your OneDrive.</ToastText>
          <ToastSource>OneDrive</ToastSource>
        </div>
      </Toast>
    </Desktop>
  );
}
